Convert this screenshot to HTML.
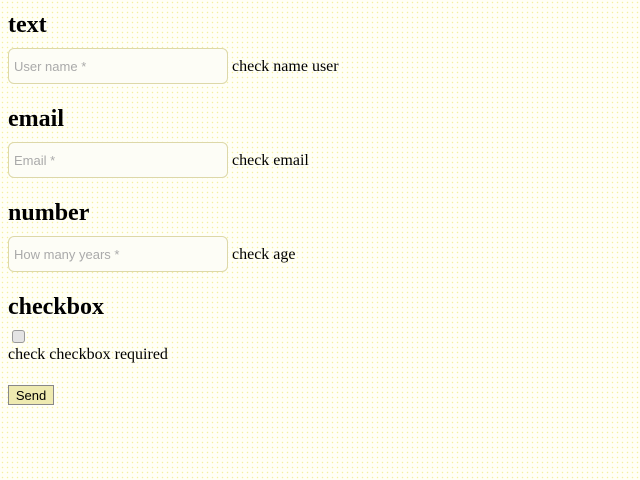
<!DOCTYPE html>
<html><head><style>
html,body{margin:0;padding:0}
body{width:640px;height:480px;background-color:#fffff6;background-image:radial-gradient(#f4f0a0 0.6px,transparent 0.9px);background-size:5px 5px;font-family:"Liberation Serif",serif;font-size:16px;color:#000;position:relative;overflow:hidden}
h2{position:absolute;left:8px;margin:0;font-size:24px;font-weight:bold;line-height:28px}
.in{position:absolute;left:8px;width:218px;height:34px;border:1px solid #ddd8a8;border-radius:6px;background:#fdfdf6;font-family:"Liberation Sans",sans-serif;font-size:13px;color:#aaa;line-height:36px;text-indent:5px}
.lb{position:absolute;left:232px;line-height:20px}
</style></head><body>
<h2 style="top:11px">text</h2>
<div class="in" style="top:48px">User name *</div><div class="lb" style="top:57px">check name user</div>
<h2 style="top:105px">email</h2>
<div class="in" style="top:142px">Email *</div><div class="lb" style="top:151px">check email</div>
<h2 style="top:199px">number</h2>
<div class="in" style="top:236px">How many years *</div><div class="lb" style="top:245px">check age</div>
<h2 style="top:293px">checkbox</h2>
<div style="position:absolute;left:12px;top:330px;width:11px;height:11px;border:1px solid #999;border-radius:3px;background:#e4e4e4"></div>
<div style="position:absolute;left:8px;top:345px;line-height:20px">check checkbox required</div>
<div style="position:absolute;left:8px;top:385px;width:44px;height:18px;border:1px solid #888;background:#eeeab0;font-family:'Liberation Sans',sans-serif;font-size:13px;text-align:center;line-height:19px">Send</div>
</body></html>
